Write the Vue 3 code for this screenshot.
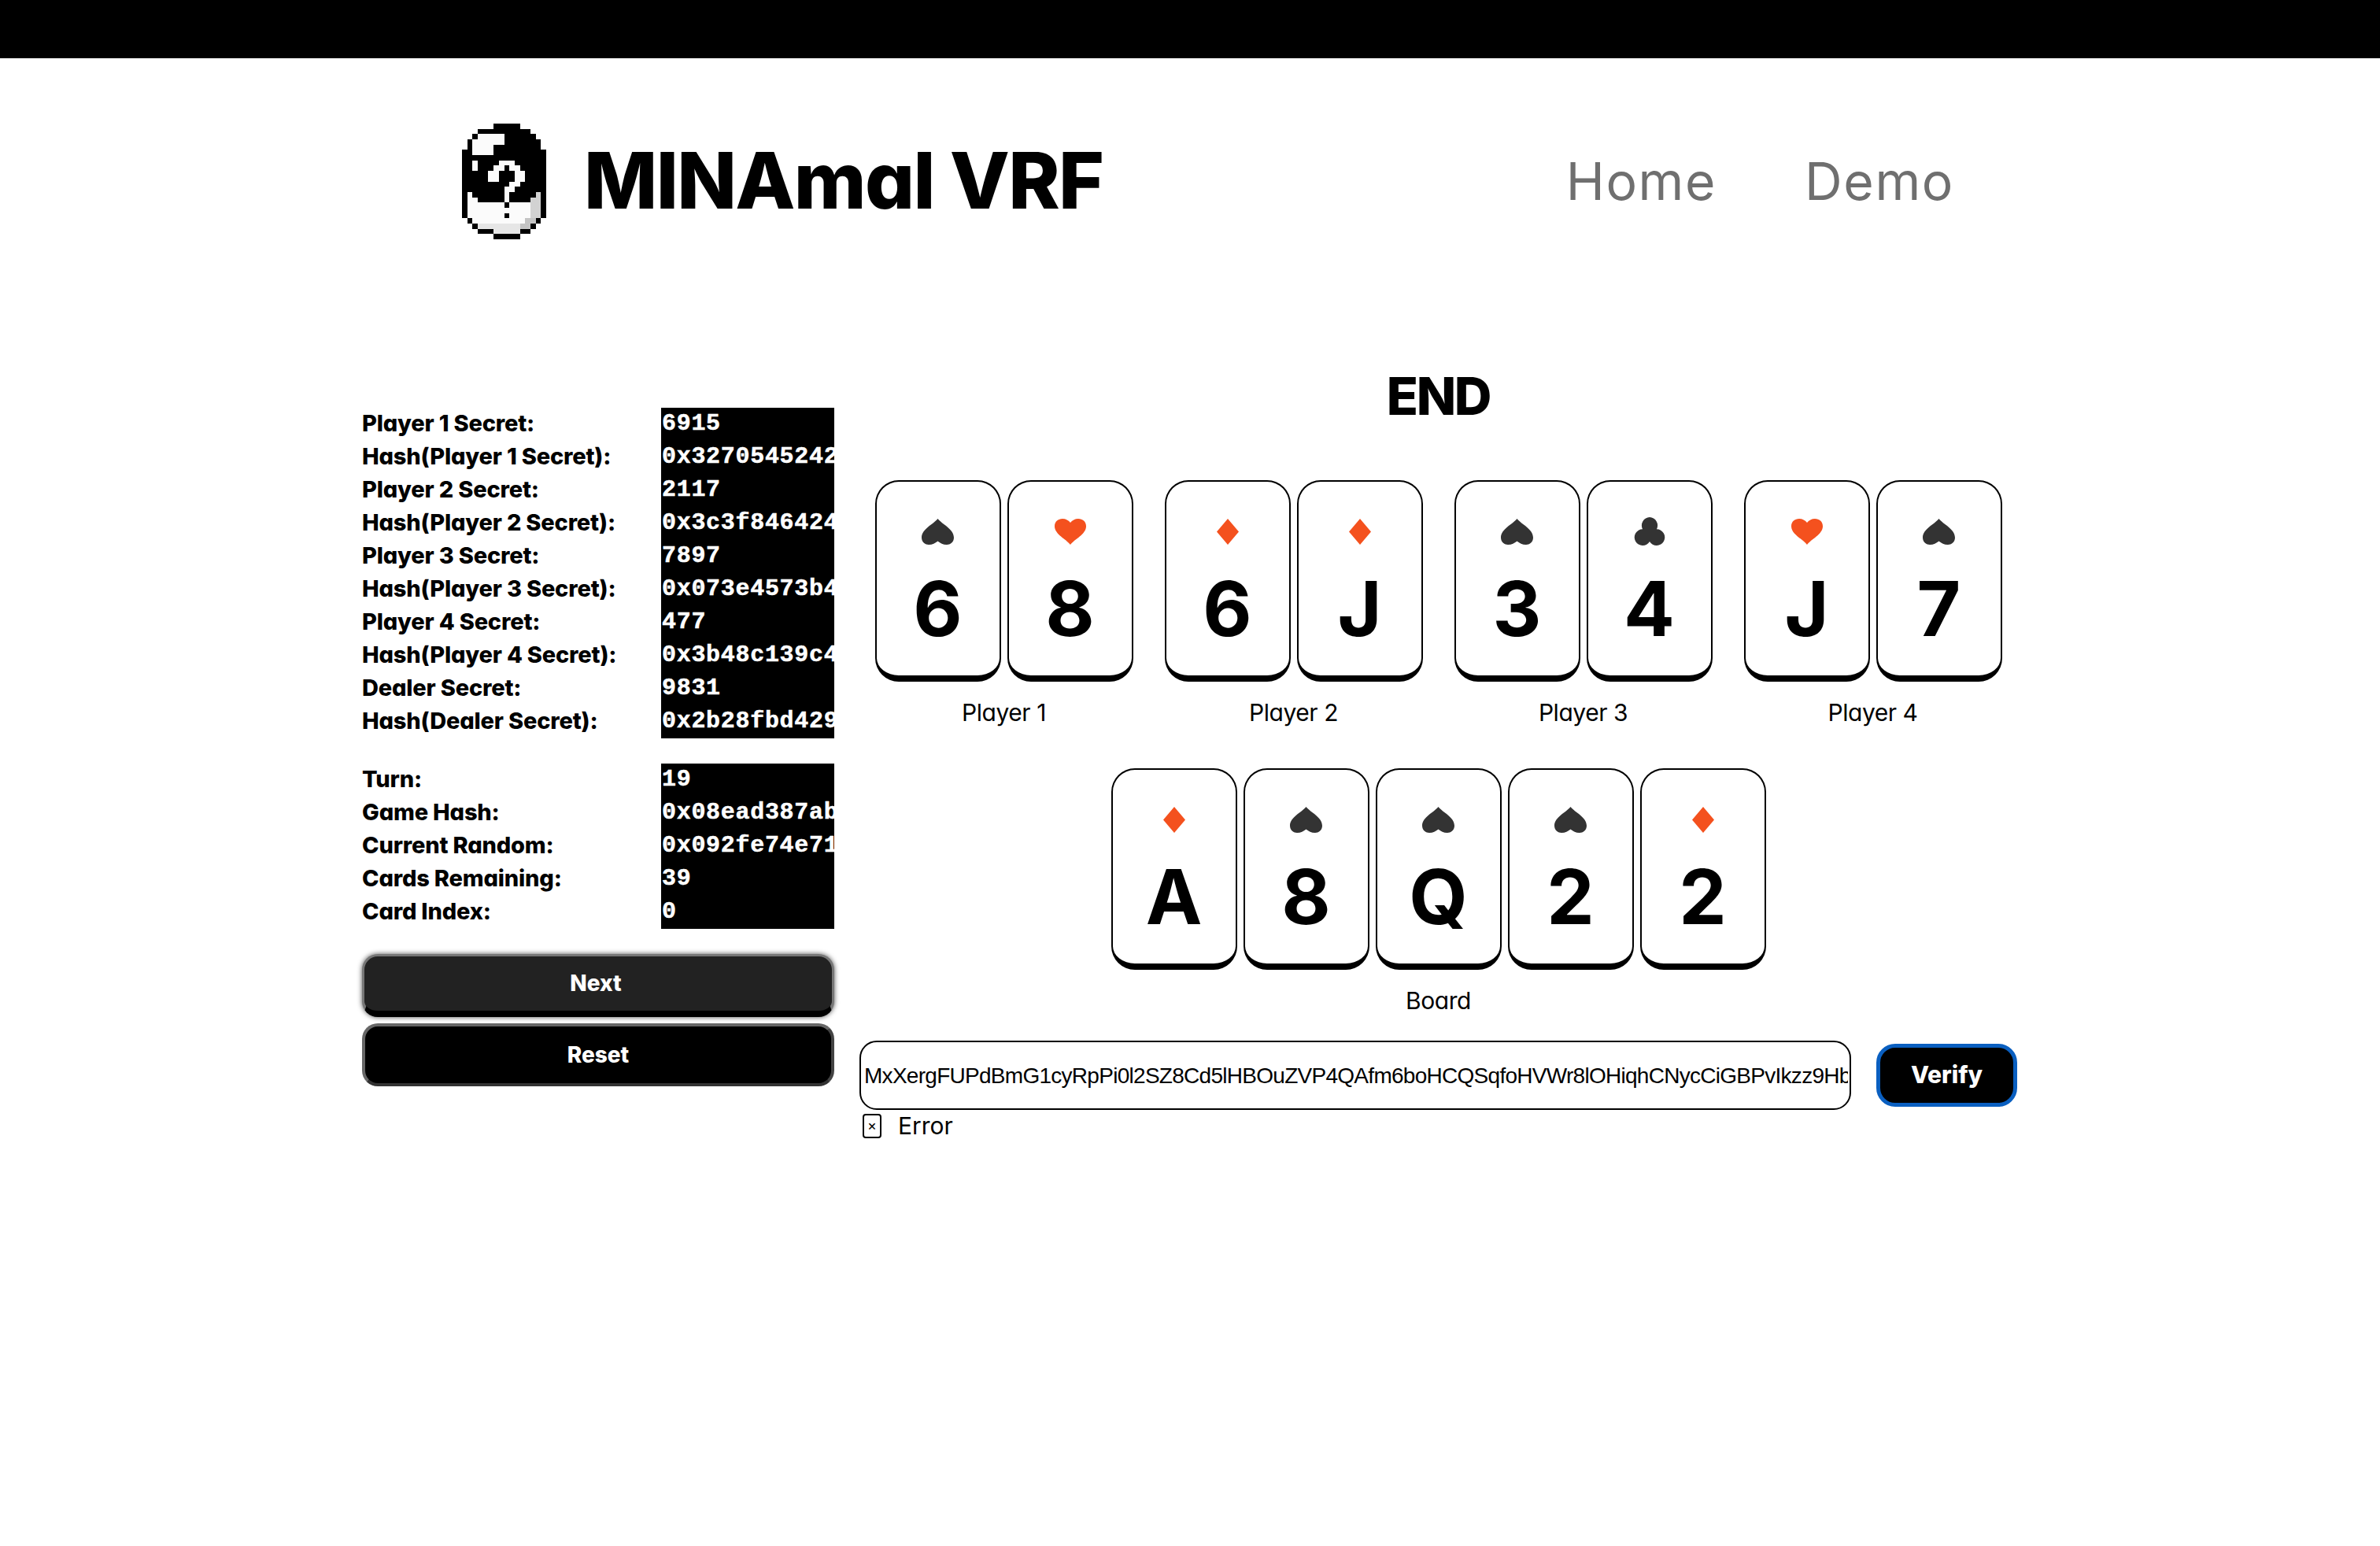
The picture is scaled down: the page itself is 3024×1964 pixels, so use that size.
<script setup>
const logoRows = [
  '......#####.....',
  '...##########...',
  '..#wwwww######..',
  '.#wwwwww#######.',
  '.#wwww#########.',
  '##wwww##########',
  '################',
  '##w####www######',
  '##w###ww#ww#####',
  '#####ww###ww####',
  '#####ww###ww####',
  '#########ww#####',
  '########ww######',
  '#w######w#####g#',
  '#ww#####w####gg#',
  '#wwwwwww#wwwwgg#',
  '#wwwwwwwwwwwwgg#',
  '#wwwwwww#wwwwgg#',
  '.#wwwwwwwwwwhh#.',
  '..#gggggggghh#..',
  '...###ggggg##...',
  '......#####.....',
]
const logoColors = { '#': '#000', w: '#fbfbfb', g: '#d2d2d2', h: '#c4c4c4' }
const logoPixels = []
logoRows.forEach((row, y) => {
  ;[...row].forEach((c, x) => {
    if (c !== '.') {
      let fill = logoColors[c]
      if (c === 'g' && y >= 19) fill = '#e6e6e6'
      logoPixels.push({ x, y, fill })
    }
  })
})

const secrets = [
  ['Player 1 Secret:', '6915'],
  ['Hash(Player 1 Secret):', '0x3270545242a1c'],
  ['Player 2 Secret:', '2117'],
  ['Hash(Player 2 Secret):', '0x3c3f846424b7e'],
  ['Player 3 Secret:', '7897'],
  ['Hash(Player 3 Secret):', '0x073e4573b4d21'],
  ['Player 4 Secret:', '477'],
  ['Hash(Player 4 Secret):', '0x3b48c139c4e90'],
  ['Dealer Secret:', '9831'],
  ['Hash(Dealer Secret):', '0x2b28fbd4291f6'],
]
const state = [
  ['Turn:', '19'],
  ['Game Hash:', '0x08ead387ab3c1'],
  ['Current Random:', '0x092fe74e71d05'],
  ['Cards Remaining:', '39'],
  ['Card Index:', '0'],
]
const suits = {
  s: { w: 41, h: 33, c: '#333', d: 'M20.5 0C26 7 41 13 41 24C41 30 36 33 32 33C27 33 24 31 20.5 28.5C17 31 14 33 9 33C5 33 0 30 0 24C0 13 15 7 20.5 0Z' },
  h: { w: 40, h: 33, c: '#f4511e', d: 'M20 33C15 26 0 20 0 9.5C0 3.5 4.5 0 10 0C14 0 18 2 20 5C22 2 26 0 30 0C35.5 0 40 3.5 40 9.5C40 20 25 26 20 33Z' },
  d: { w: 28, h: 33, c: '#f4511e', d: 'M14 0L28 16.5L14 33L0 16.5Z' },
  c: { w: 44, h: 36, c: '#333', d: 'M22 0A10.5 10.5 0 0 1 31 15.2A10.4 10.4 0 1 1 22 31A10.4 10.4 0 1 1 13 15.2A10.5 10.5 0 0 1 22 0Z' },
}
const players = [
  { name: 'Player 1', cards: [['s', '6'], ['h', '8']] },
  { name: 'Player 2', cards: [['d', '6'], ['d', 'J']] },
  { name: 'Player 3', cards: [['s', '3'], ['c', '4']] },
  { name: 'Player 4', cards: [['h', 'J'], ['s', '7']] },
]
const board = [['d', 'A'], ['s', '8'], ['s', 'Q'], ['s', '2'], ['d', '2']]
const token = 'MxXergFUPdBmG1cyRpPi0l2SZ8Cd5lHBOuZVP4QAfm6boHCQSqfoHVWr8lOHiqhCNycCiGBPvIkzz9Hb'
</script>

<template>
  <div class="page">
    <div class="topbar"></div>
    <header class="header">
      <div class="brand">
        <svg class="logo" viewBox="0 0 16 22" width="107" height="147" shape-rendering="crispEdges">
          <rect v-for="(p, i) in logoPixels" :key="i" :x="p.x" :y="p.y" width="1.02" height="1.02" :fill="p.fill" />
        </svg>
        <span class="title">MINAmal VRF</span>
      </div>
      <nav class="nav">
        <a>Home</a>
        <a>Demo</a>
      </nav>
    </header>

    <main class="main">
      <section class="side">
        <div class="table">
          <div v-for="r in secrets" :key="r[0]" class="row">
            <span class="label">{{ r[0] }}</span>
            <span class="value">{{ r[1] }}</span>
          </div>
        </div>
        <div class="table">
          <div v-for="r in state" :key="r[0]" class="row">
            <span class="label">{{ r[0] }}</span>
            <span class="value">{{ r[1] }}</span>
          </div>
        </div>
        <button class="btn next">Next</button>
        <button class="btn reset">Reset</button>
      </section>

      <section class="game">
        <h1 class="phase">END</h1>
        <div class="players">
          <div v-for="p in players" :key="p.name" class="group">
            <div class="hand">
              <div v-for="(c, i) in p.cards" :key="i" class="card">
                <div class="suit">
                  <svg :width="suits[c[0]].w" :height="suits[c[0]].h" :viewBox="`0 0 ${suits[c[0]].w} ${suits[c[0]].h}`">
                    <path :d="suits[c[0]].d" :fill="suits[c[0]].c" />
                  </svg>
                </div>
                <div class="rank">{{ c[1] }}</div>
              </div>
            </div>
            <div class="caption">{{ p.name }}</div>
          </div>
        </div>
        <div class="group board">
          <div class="hand">
            <div v-for="(c, i) in board" :key="i" class="card">
              <div class="suit">
                <svg :width="suits[c[0]].w" :height="suits[c[0]].h" :viewBox="`0 0 ${suits[c[0]].w} ${suits[c[0]].h}`">
                  <path :d="suits[c[0]].d" :fill="suits[c[0]].c" />
                </svg>
              </div>
              <div class="rank">{{ c[1] }}</div>
            </div>
          </div>
          <div class="caption">Board</div>
        </div>

        <div class="verify">
          <input class="proof" :value="token" readonly />
          <button class="verify-btn">Verify</button>
        </div>
        <div class="status">
          <span class="check">×</span>
          <span class="status-text">Error</span>
        </div>
      </section>
    </main>
  </div>
</template>

<style>
html, body { margin: 0; background: #fff; }
</style>

<style scoped>
.page {
  width: 3024px;
  min-height: 1964px;
  background: #fff;
  color: #000;
  font-family: Inter, "Liberation Sans", sans-serif;
  font-feature-settings: "cv11";
}
.topbar { height: 74px; background: #000; }
.header {
  height: 312px;
  box-sizing: border-box;
  padding: 0 541px 0 587px;
  display: flex;
  align-items: center;
  justify-content: space-between;
}
.brand { display: flex; align-items: center; gap: 48px; }
.logo { display: block; }
.title { font-size: 99px; font-weight: 800; letter-spacing: -1.7px; line-height: 1; margin-top: -2px; }
.nav { display: flex; gap: 112px; }
.nav a { font-size: 66px; letter-spacing: 1.6px; color: #6f6f6f; line-height: 1; }

.main { display: flex; padding: 0 460px; gap: 32px; align-items: flex-start; }
.side { width: 600px; padding-top: 132px; display: flex; flex-direction: column; }
.table { display: flex; flex-direction: column; margin-bottom: 32px; }
.row { display: flex; height: 42px; }
.label {
  width: 380px;
  font-size: 29px;
  font-weight: 800;
  line-height: 40px;
  letter-spacing: -0.18px;
  white-space: nowrap;
}
.value {
  width: 220px;
  background: #000;
  color: #fff;
  font-family: "Liberation Mono", monospace;
  font-weight: 700;
  font-size: 30px;
  letter-spacing: 0.7px;
  line-height: 41px;
  -webkit-text-stroke: 0.5px #fff;
  overflow: hidden;
  white-space: nowrap;
  box-sizing: border-box;
  padding-left: 1px;
}
.btn {
  width: 600px;
  box-sizing: border-box;
  color: #fff;
  font-family: inherit;
  font-feature-settings: inherit;
  font-size: 28px;
  font-weight: 800;
  border-radius: 20px;
  padding: 0;
  display: block;
}
.next {
  height: 80px;
  background: #222;
  border: 3px solid #777;
  border-bottom: 8px solid #000;
  box-shadow: 0 0 6px rgba(0, 0, 0, 0.7);
  padding: 0 6px 2px 0;
}
.reset {
  height: 80px;
  margin-top: 8px;
  background: #000;
  border: 4px solid #666;
  border-bottom-color: #333;
  border-right-color: #444;
}

.game { width: 1471px; padding-top: 80px; display: flex; flex-direction: column; align-items: center; }
.phase { margin: 0 0 72px; height: 72px; font-size: 66px; font-weight: 800; line-height: 74px; letter-spacing: -2.4px; }
.players { display: flex; gap: 40px; }
.group { display: flex; flex-direction: column; align-items: center; }
.board { margin-top: 52px; }
.hand { display: flex; gap: 8px; }
.card {
  width: 160px;
  height: 256px;
  box-sizing: border-box;
  border: 2px solid #000;
  border-bottom: 8px solid #000;
  border-radius: 30px;
  background: #fff;
  display: flex;
  flex-direction: column;
  align-items: center;
}
.suit { height: 34px; margin-top: 46px; display: flex; align-items: center; justify-content: center; }
.suit svg { display: block; }
.rank { margin-top: 33px; font-size: 96px; line-height: 97px; font-weight: 700; }
.caption { margin-top: 20px; font-size: 30px; line-height: 38px; letter-spacing: -0.45px; }

.verify {
  width: 1471px;
  margin-top: 32px;
  display: flex;
  justify-content: space-between;
  align-items: center;
}
.proof {
  width: 1260px;
  height: 88px;
  box-sizing: border-box;
  border: 2px solid #000;
  border-radius: 22px;
  padding: 2px 2px 0 4px;
  font-family: "Liberation Sans", sans-serif;
  font-size: 28px;
  letter-spacing: -0.72px;
  color: #000;
  outline: none;
}
.verify-btn {
  width: 179px;
  height: 80px;
  background: #000;
  color: #fff;
  border: 5px solid #0a5fc0;
  border-radius: 24px;
  font-family: inherit;
  font-feature-settings: inherit;
  font-size: 30px;
  font-weight: 800;
  padding: 0 0 2px;
}
.status {
  width: 1471px;
  height: 36px;
  margin-top: 2px;
  display: flex;
  align-items: center;
  gap: 21px;
  padding-left: 4px;
  box-sizing: border-box;
}
.check {
  width: 24px;
  height: 31px;
  box-sizing: border-box;
  border: 2px solid #000;
  border-radius: 4px;
  font-size: 18px;
  line-height: 26px;
  text-align: center;
}
.status-text { font-size: 30px; line-height: 36px; }
</style>
